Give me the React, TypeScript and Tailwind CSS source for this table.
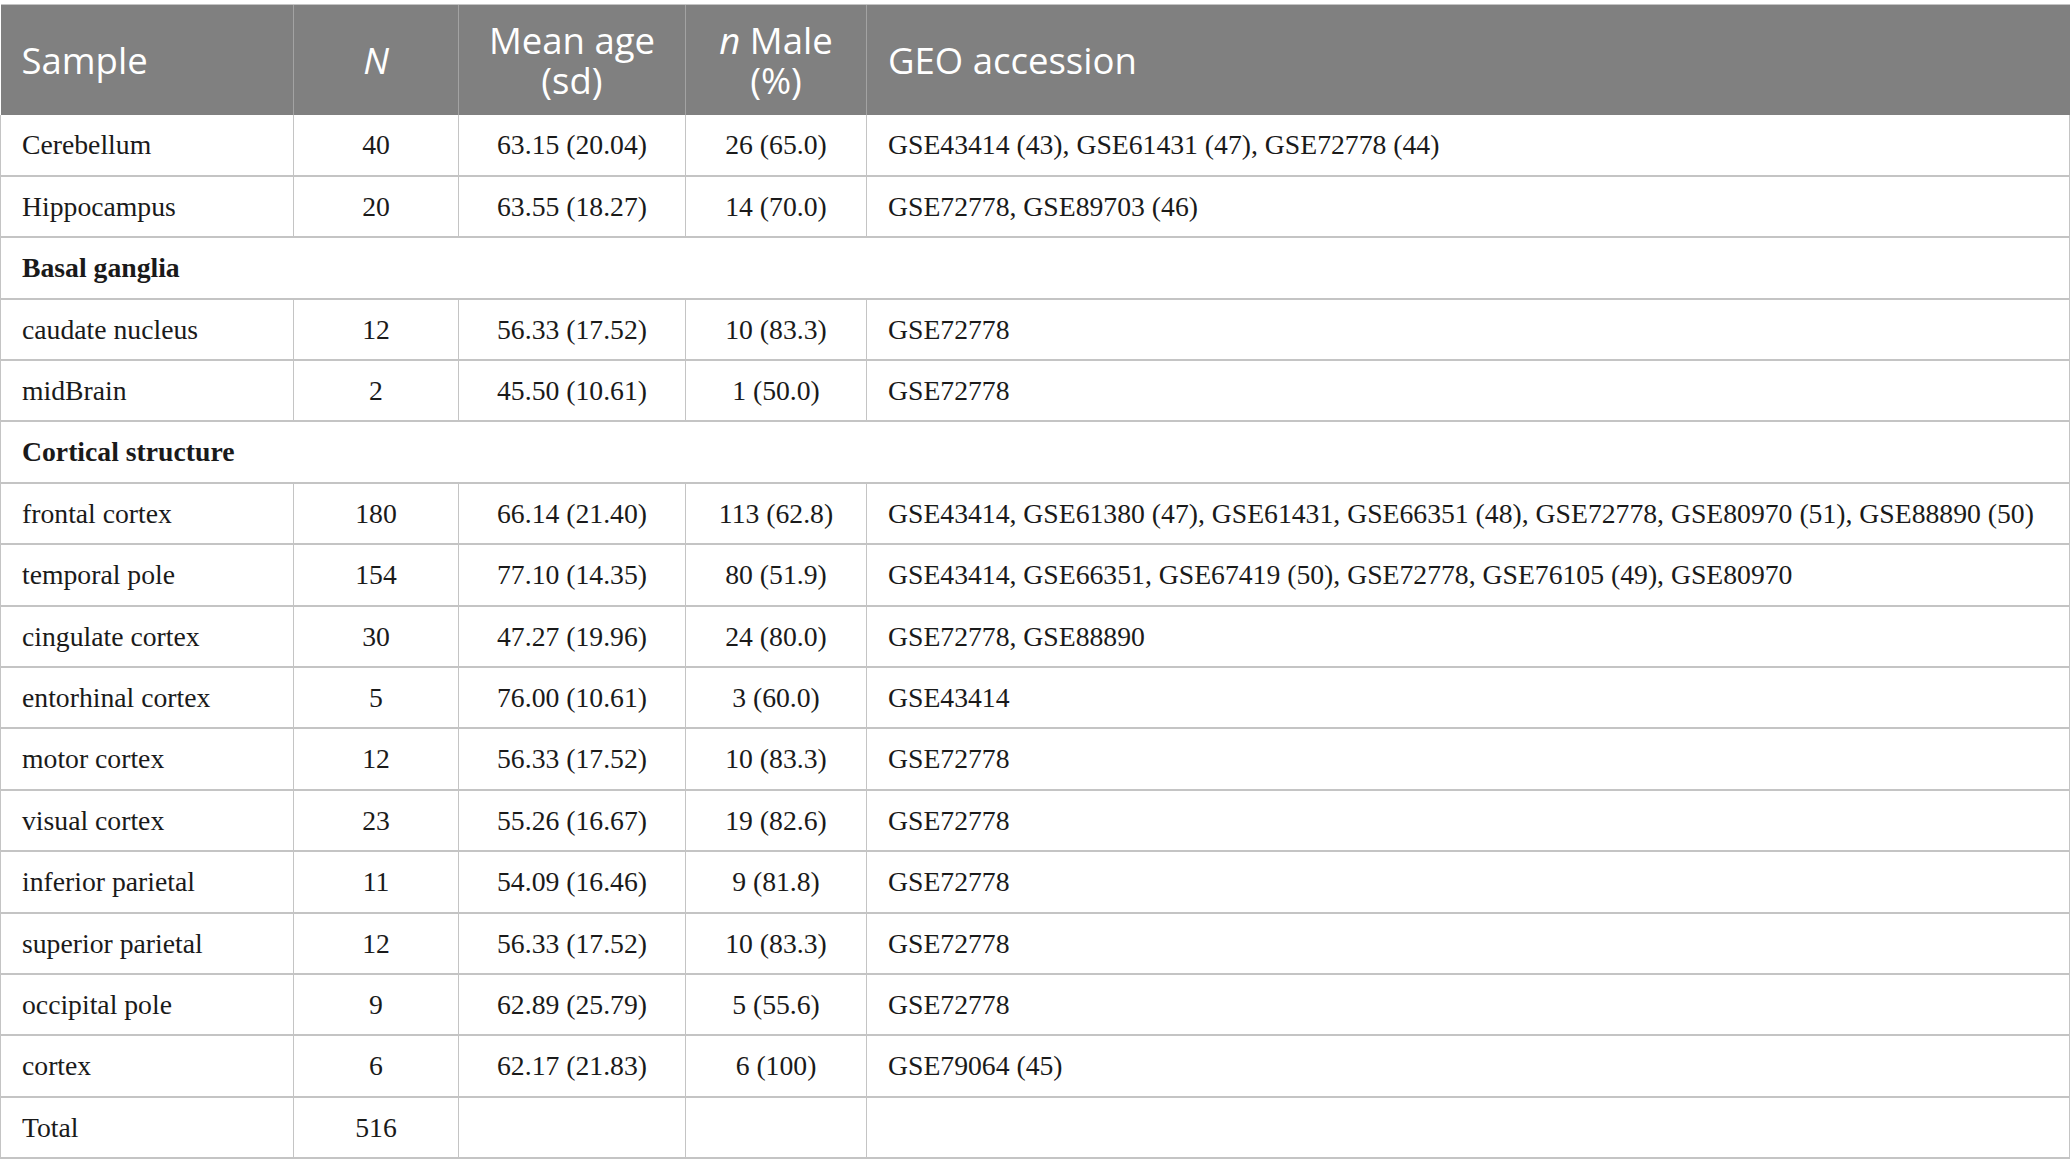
const rows: Array<
  | { kind: 'group'; label: string }
  | { kind: 'data'; sample: string; n: string; age: string; male: string; geo: string }
> = [
  { kind: 'data', sample: 'Cerebellum', n: '40', age: '63.15 (20.04)', male: '26 (65.0)', geo: 'GSE43414 (43), GSE61431 (47), GSE72778 (44)' },
  { kind: 'data', sample: 'Hippocampus', n: '20', age: '63.55 (18.27)', male: '14 (70.0)', geo: 'GSE72778, GSE89703 (46)' },
  { kind: 'group', label: 'Basal ganglia' },
  { kind: 'data', sample: 'caudate nucleus', n: '12', age: '56.33 (17.52)', male: '10 (83.3)', geo: 'GSE72778' },
  { kind: 'data', sample: 'midBrain', n: '2', age: '45.50 (10.61)', male: '1 (50.0)', geo: 'GSE72778' },
  { kind: 'group', label: 'Cortical structure' },
  { kind: 'data', sample: 'frontal cortex', n: '180', age: '66.14 (21.40)', male: '113 (62.8)', geo: 'GSE43414, GSE61380 (47), GSE61431, GSE66351 (48), GSE72778, GSE80970 (51), GSE88890 (50)' },
  { kind: 'data', sample: 'temporal pole', n: '154', age: '77.10 (14.35)', male: '80 (51.9)', geo: 'GSE43414, GSE66351, GSE67419 (50), GSE72778, GSE76105 (49), GSE80970' },
  { kind: 'data', sample: 'cingulate cortex', n: '30', age: '47.27 (19.96)', male: '24 (80.0)', geo: 'GSE72778, GSE88890' },
  { kind: 'data', sample: 'entorhinal cortex', n: '5', age: '76.00 (10.61)', male: '3 (60.0)', geo: 'GSE43414' },
  { kind: 'data', sample: 'motor cortex', n: '12', age: '56.33 (17.52)', male: '10 (83.3)', geo: 'GSE72778' },
  { kind: 'data', sample: 'visual cortex', n: '23', age: '55.26 (16.67)', male: '19 (82.6)', geo: 'GSE72778' },
  { kind: 'data', sample: 'inferior parietal', n: '11', age: '54.09 (16.46)', male: '9 (81.8)', geo: 'GSE72778' },
  { kind: 'data', sample: 'superior parietal', n: '12', age: '56.33 (17.52)', male: '10 (83.3)', geo: 'GSE72778' },
  { kind: 'data', sample: 'occipital pole', n: '9', age: '62.89 (25.79)', male: '5 (55.6)', geo: 'GSE72778' },
  { kind: 'data', sample: 'cortex', n: '6', age: '62.17 (21.83)', male: '6 (100)', geo: 'GSE79064 (45)' },
  { kind: 'data', sample: 'Total', n: '516', age: '', male: '', geo: '' },
]

export default function App() {
  return (
    <div className="w-[2070px] bg-white pt-[4px]">
      <table className="w-full table-fixed border-collapse font-['Liberation_Serif',serif] text-[27.7px] text-[#1a1a1a]">
        <colgroup>
          <col className="w-[293px]" />
          <col className="w-[165px]" />
          <col className="w-[227px]" />
          <col className="w-[181px]" />
          <col />
        </colgroup>
        <thead>
          <tr className="h-[110px] bg-[#808080] font-['Open_Sans',sans-serif] text-[36.5px] leading-[40px] font-normal text-white">
            <th className="border-t border-[#c4c4c4] pl-[21px] text-left font-normal">Sample</th>
            <th className="border-t border-l border-t-[#c4c4c4] border-l-[#a3a3a3] text-center font-normal">
              <i>N</i>
            </th>
            <th className="border-t border-l border-t-[#c4c4c4] border-l-[#a3a3a3] text-center font-normal">
              Mean age
              <br />
              (sd)
            </th>
            <th className="border-t border-l border-t-[#c4c4c4] border-l-[#a3a3a3] text-center font-normal">
              <i>n</i> Male
              <br />
              (%)
            </th>
            <th className="border-t border-l border-t-[#c4c4c4] border-l-[#a3a3a3] pl-[21px] text-left font-normal">GEO accession</th>
          </tr>
        </thead>
        <tbody>
          {rows.map((row, i) =>
            row.kind === 'group' ? (
              <tr key={i} className="h-[61.4px]">
                <td colSpan={5} className="border-x border-b-2 border-[#c4c4c4] pl-[21px] font-bold">
                  {row.label}
                </td>
              </tr>
            ) : (
              <tr key={i} className="h-[61.4px]">
                <td className="border-l border-b-2 border-[#c4c4c4] pl-[21px]">{row.sample}</td>
                <td className="border-l border-b-2 border-[#c4c4c4] text-center">{row.n}</td>
                <td className="border-l border-b-2 border-[#c4c4c4] text-center">{row.age}</td>
                <td className="border-l border-b-2 border-[#c4c4c4] text-center">{row.male}</td>
                <td className="border-x border-b-2 border-[#c4c4c4] pl-[21px]">{row.geo}</td>
              </tr>
            )
          )}
        </tbody>
      </table>
    </div>
  )
}
